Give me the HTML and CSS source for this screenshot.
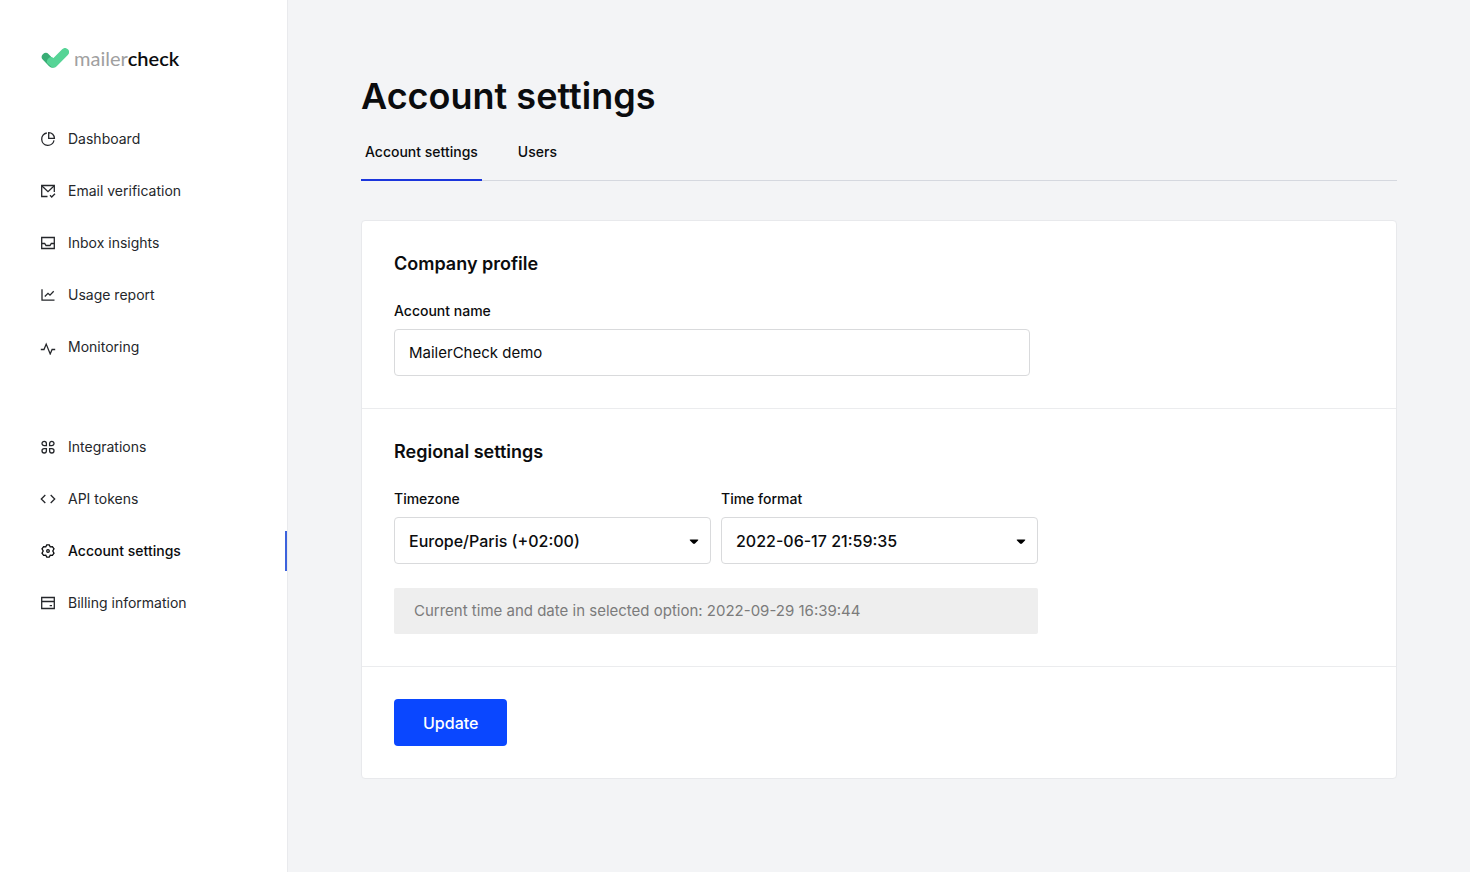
FILE: index.html
```html
<!DOCTYPE html>
<html lang="en">
<head>
<meta charset="utf-8">
<title>Account settings - MailerCheck</title>
<link rel="stylesheet" href="styles.css">
</head>
<body>
<div class="layout">
  <aside class="sidebar">
    <a class="logo" href="#" aria-label="mailercheck">
      <svg class="logo-mark" viewBox="0 0 28 20" width="28" height="20" fill="none" stroke-linecap="round" stroke-linejoin="round" aria-hidden="true">
        <path d="M4.800 9L11 15.500" stroke="#38ad75" stroke-width="8"/>
        <path d="M10 13.300L12.600 15.600L24 4.200" stroke="#56d496" stroke-width="8"/>
      </svg>
      <span class="logo-text">mailer<span class="logo-strong">check</span></span>
    </a>
    <nav class="nav" aria-label="Main">
      <ul class="nav-group">
        <li><a class="nav-link" href="#"><svg class="icon" viewBox="0 0 16 16"><path d="M6.800 2A6.200 6.200 0 1 0 14 9.300"/><path d="M8.700 1.600V7.300H14.400A5.700 5.700 0 0 0 8.700 1.600Z"/></svg>Dashboard</a></li>
        <li><a class="nav-link" href="#"><svg class="icon" viewBox="0 0 16 16"><path d="M7.500 13.500H1.700V2.500H14.300V9"/><path d="M2 3L8 8.700L14 3"/><path d="M10 12.300L11.700 14L15 10.700"/></svg>Email verification</a></li>
        <li><a class="nav-link" href="#"><svg class="icon" viewBox="0 0 16 16"><path d="M1.700 2.500H14.300V13.500H1.700Z"/><path d="M1.700 8.500H4.700L6 10.500H10L11.300 8.500H14.300"/></svg>Inbox insights</a></li>
        <li><a class="nav-link" href="#"><svg class="icon" viewBox="0 0 16 16"><path d="M2 2.200V13.200H14.500"/><path d="M4.800 9.500L8 6.300L10 8.200L13.700 4.300"/></svg>Usage report</a></li>
        <li><a class="nav-link" href="#"><svg class="icon" viewBox="0 0 16 16"><path d="M0.800 10.500H4L6.200 5.100L10.200 14.900L12.100 10.500H15.200"/></svg>Monitoring</a></li>
      </ul>
      <ul class="nav-group">
        <li><a class="nav-link" href="#"><svg class="icon" viewBox="0 0 16 16"><path d="M4.200 2.300A2.200 2.200 0 1 0 4.200 6.700H6.400V4.500A2.200 2.200 0 0 0 4.200 2.300ZM11.800 2.300A2.200 2.200 0 0 0 9.600 4.500V6.700H11.800A2.200 2.200 0 1 0 11.800 2.300ZM4.200 9.600A2.200 2.200 0 1 0 6.400 11.800V9.600ZM9.600 9.600V11.800A2.200 2.200 0 1 0 11.800 9.600Z"/></svg>Integrations</a></li>
        <li><a class="nav-link" href="#"><svg class="icon" viewBox="0 0 16 16"><path d="M5.300 4L1.300 8L5.300 12M10.700 4L14.700 8L10.700 12"/></svg>API tokens</a></li>
        <li><a class="nav-link nav-link-active" href="#" aria-current="page"><svg class="icon" viewBox="0 0 16 16"><path d="M6.800 1.800H9.200L10.200 3.800L12.400 3.600L14 5.800L12.800 8L14 10.200L12.400 12.400L10.200 12.200L9.200 14.200H6.800L5.800 12.200L3.600 12.400L2 10.200L3.200 8L2 5.800L3.600 3.600L5.800 3.800Z"/><circle cx="8" cy="8" r="1.300"/></svg>Account settings</a></li>
        <li><a class="nav-link" href="#"><svg class="icon" viewBox="0 0 16 16"><path d="M1.700 2.500H14.300V13.500H1.700ZM1.700 6.500H14.300M9.700 10.700H12"/></svg>Billing information</a></li>
      </ul>
    </nav>
  </aside>
  <main class="content">
    <h1 class="page-title">Account settings</h1>
    <nav class="tabs" aria-label="Settings">
      <a class="tab tab-active" href="#" aria-current="page">Account settings</a>
      <a class="tab" href="#">Users</a>
    </nav>
    <form class="card">
      <section class="section">
        <h2 class="section-title">Company profile</h2>
        <div class="field field-name">
          <label class="label" for="account-name">Account name</label>
          <input class="control" id="account-name" type="text" value="MailerCheck demo">
        </div>
      </section>
      <section class="section">
        <h2 class="section-title">Regional settings</h2>
        <div class="field-row">
          <div class="field">
            <label class="label" for="timezone">Timezone</label>
            <div class="select-wrap">
              <select class="control select" id="timezone"><option>Europe/Paris (+02:00)</option></select>
              <svg class="caret" viewBox="0 0 10 6" width="10" height="6" aria-hidden="true"><path d="M1.500 .5H8.500Q10 .5 9 1.500L6 4.600Q5 5.500 4 4.600L1 1.500Q0 .5 1.500 .5Z"/></svg>
            </div>
          </div>
          <div class="field">
            <label class="label" for="time-format">Time format</label>
            <div class="select-wrap">
              <select class="control select" id="time-format"><option>2022-06-17 21:59:35</option></select>
              <svg class="caret" viewBox="0 0 10 6" width="10" height="6" aria-hidden="true"><path d="M1.500 .5H8.500Q10 .5 9 1.500L6 4.600Q5 5.500 4 4.600L1 1.500Q0 .5 1.500 .5Z"/></svg>
            </div>
          </div>
        </div>
        <p class="notice">Current time and date in selected option: 2022-09-29 16:39:44</p>
      </section>
      <section class="section">
        <button class="button" type="submit">Update</button>
      </section>
    </form>
  </main>
</div>
</body>
</html>
```
FILE: styles.css
```css
* {
  box-sizing: border-box;
}

body {
  margin: 0;
  background: #f3f4f6;
  color: #0b0c0e;
  font-family: Inter, "Liberation Sans", sans-serif;
  font-size: 14px;
  line-height: 20px;
}

a {
  color: inherit;
  text-decoration: none;
}

.layout {
  display: flex;
  min-height: 100vh;
}

.sidebar {
  flex: 0 0 288px;
  padding-top: 46px;
  background: #fff;
  border-right: 1px solid #e9eaed;
}

.logo {
  display: flex;
  align-items: center;
  gap: 5px;
  height: 24px;
  margin: 0 0 49px 41px;
}

.logo-text {
  color: #a0a0a0;
  font-family: Lato, sans-serif;
  font-size: 20px;
}

.logo-strong {
  color: #0b0c0e;
  font-weight: 600;
}

.nav {
  display: flex;
  flex-direction: column;
  gap: 60px;
}

.nav-group {
  display: flex;
  flex-direction: column;
  gap: 12px;
  margin: 0;
  padding: 0;
  list-style: none;
}

.nav-link {
  display: flex;
  align-items: center;
  gap: 12px;
  height: 40px;
  padding-left: 40px;
  border-right: 2px solid transparent;
  color: #25272b;
}

.nav-link-active {
  border-right-color: #3c62dc;
  color: #0b0c0e;
  font-weight: 500;
}

.icon {
  width: 16px;
  height: 16px;
  fill: none;
  stroke: currentColor;
  stroke-width: 1.300;
}

.content {
  flex: 1;
  min-width: 0;
  padding: 72px 73px;
}

.page-title {
  margin: 0;
  font-size: 36px;
  font-weight: 600;
  line-height: 48px;
}

.tabs {
  display: flex;
  gap: 32px;
  margin-bottom: 39px;
  padding-top: 22px;
  border-bottom: 1px solid #d5d8df;
}

.tab {
  margin-bottom: -1px;
  padding: 0 4px 17px;
  border-bottom: 2px solid transparent;
  font-weight: 500;
}

.tab-active {
  border-bottom-color: #1a35dc;
}

.card {
  background: #fff;
  border: 1px solid #e8e9ec;
  border-radius: 4px;
}

.section {
  padding: 32px;
}

.section + .section {
  border-top: 1px solid #ebecee;
}

.section-title {
  margin: 0 0 26px;
  font-size: 18px;
  font-weight: 600;
  line-height: 22px;
}

.field-name {
  max-width: 636px;
}

.field-row {
  display: grid;
  grid-template-columns: 1fr 1fr;
  gap: 10px;
  max-width: 644px;
}

.label {
  display: block;
  margin-bottom: 8px;
  font-weight: 500;
}

.control {
  display: block;
  width: 100%;
  height: 47px;
  padding: 0 14px;
  background: #fff;
  border: 1px solid #d9dadc;
  border-radius: 4px;
  color: inherit;
  font: inherit;
  font-size: 15px;
}

.select {
  appearance: none;
  font-size: 16px;
  font-weight: 500;
}

.select-wrap {
  position: relative;
}

.caret {
  position: absolute;
  top: 22px;
  right: 12px;
  pointer-events: none;
}

.notice {
  max-width: 644px;
  margin: 24px 0 0;
  padding: 13px 20px;
  background: #eee;
  border-radius: 2px;
  color: #7b7b7b;
  font-size: 15px;
}

.button {
  display: block;
  height: 47px;
  padding: 0 29px;
  background: #0a47ff;
  border: 0;
  border-radius: 4px;
  color: #fff;
  font: inherit;
  font-size: 16px;
  font-weight: 500;
}
```
